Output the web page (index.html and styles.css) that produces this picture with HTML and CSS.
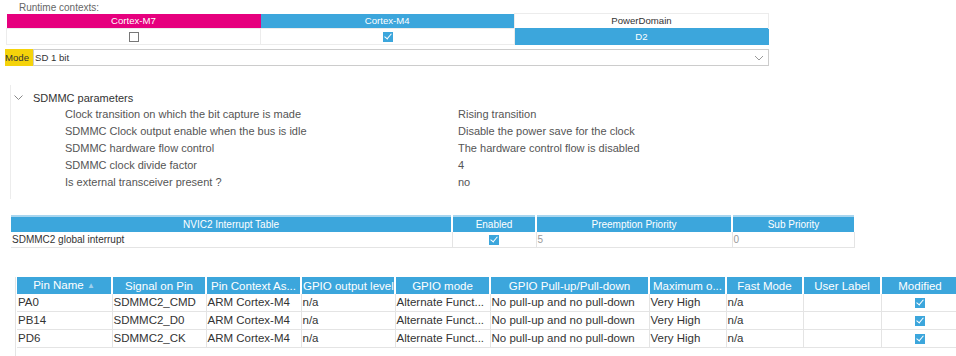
FILE: index.html
```html
<!DOCTYPE html>
<html lang="en">
  <head>
    <meta charset="UTF-8" />
    <meta name="viewport" content="width=device-width, initial-scale=1.0" />
    <title>SDMMC2 Configuration</title>
    <link rel="stylesheet" href="styles.css">
  </head>
  <body>
    <div class="runtime">
      <p class="runtime-label">Runtime contexts:</p>
      <table class="context-table">
        <tr>
          <th class="m7">Cortex-M7</th>
          <th class="m4">Cortex-M4</th>
          <th class="domain">PowerDomain</th>
        </tr>
        <tr>
          <td><span class="check"></span></td>
          <td><span class="check checked"></span></td>
          <td class="d2">D2</td>
        </tr>
      </table>
    </div>

    <div class="mode-row">
      <span class="mode-label">Mode</span>
      <div class="mode-select">
        <span>SD 1 bit</span>
        <svg width="10" height="6" viewBox="0 0 10 6"><path d="M1 1 L5 5 L9 1" fill="none" stroke="#999" stroke-width="1" /></svg>
      </div>
    </div>

    <div class="params">
      <div class="params-title">
        <svg width="9" height="6" viewBox="0 0 9 6"><path d="M0.5 0.5 L4.5 4.5 L8.5 0.5" fill="none" stroke="#888" stroke-width="1" /></svg>
        <span>SDMMC parameters</span>
      </div>
      <div class="param"><span class="param-name">Clock transition on which the bit capture is made</span><span>Rising transition</span></div>
      <div class="param"><span class="param-name">SDMMC Clock output enable when the bus is idle</span><span>Disable the power save for the clock</span></div>
      <div class="param"><span class="param-name">SDMMC hardware flow control</span><span>The hardware control flow is disabled</span></div>
      <div class="param"><span class="param-name">SDMMC clock divide factor</span><span>4</span></div>
      <div class="param"><span class="param-name">Is external transceiver present ?</span><span>no</span></div>
    </div>

    <table class="nvic-table">
      <colgroup>
        <col style="width: 441px" />
        <col style="width: 84px" />
        <col style="width: 196px" />
        <col style="width: 122px" />
      </colgroup>
      <tr>
        <th>NVIC2 Interrupt Table</th>
        <th>Enabled</th>
        <th>Preemption Priority</th>
        <th>Sub Priority</th>
      </tr>
      <tr>
        <td>SDMMC2 global interrupt</td>
        <td class="center"><span class="check checked"></span></td>
        <td class="muted">5</td>
        <td class="muted">0</td>
      </tr>
    </table>

    <div class="pins">
      <table class="pin-table">
        <colgroup>
          <col style="width: 95px" />
          <col style="width: 94px" />
          <col style="width: 95px" />
          <col style="width: 94px" />
          <col style="width: 95px" />
          <col style="width: 159px" />
          <col style="width: 77px" />
          <col style="width: 77px" />
          <col style="width: 78px" />
          <col style="width: 77px" />
        </colgroup>
        <tr>
          <th>Pin Name <span class="sort">&#9650;</span></th>
          <th>Signal on Pin</th>
          <th>Pin Context As...</th>
          <th>GPIO output level</th>
          <th>GPIO mode</th>
          <th>GPIO Pull-up/Pull-down</th>
          <th>Maximum o...</th>
          <th>Fast Mode</th>
          <th>User Label</th>
          <th>Modified</th>
        </tr>
        <tr>
          <td>PA0</td>
          <td>SDMMC2_CMD</td>
          <td>ARM Cortex-M4</td>
          <td>n/a</td>
          <td>Alternate Funct...</td>
          <td>No pull-up and no pull-down</td>
          <td>Very High</td>
          <td>n/a</td>
          <td></td>
          <td class="center"><span class="check checked"></span></td>
        </tr>
        <tr>
          <td>PB14</td>
          <td>SDMMC2_D0</td>
          <td>ARM Cortex-M4</td>
          <td>n/a</td>
          <td>Alternate Funct...</td>
          <td>No pull-up and no pull-down</td>
          <td>Very High</td>
          <td>n/a</td>
          <td></td>
          <td class="center"><span class="check checked"></span></td>
        </tr>
        <tr>
          <td>PD6</td>
          <td>SDMMC2_CK</td>
          <td>ARM Cortex-M4</td>
          <td>n/a</td>
          <td>Alternate Funct...</td>
          <td>No pull-up and no pull-down</td>
          <td>Very High</td>
          <td>n/a</td>
          <td></td>
          <td class="center"><span class="check checked"></span></td>
        </tr>
      </table>
    </div>
  </body>
</html>
```

FILE: styles.css
```css
body {
  margin: 0;
  background-color: #ffffff;
  color: #333333;
  font-family: "Liberation Sans", Arial, sans-serif;
  overflow: hidden;
}

table {
  border-collapse: collapse;
  table-layout: fixed;
}

.runtime {
  padding: 2px 0 0 6px;
}

.runtime-label {
  margin: 0 0 0 13px;
  font-size: 10px;
  line-height: 11px;
  color: #666666;
}

.context-table {
  width: 763px;
  font-size: 9.6px;
}

.context-table th {
  height: 14px;
  padding: 0;
  font-weight: normal;
  color: #ffffff;
  line-height: 14px;
}

.context-table .m7 {
  background-color: #e6007e;
}

.context-table .m4 {
  background-color: #3ca6dc;
}

.context-table .domain {
  background-color: #ffffff;
  color: #333333;
  border: 1px solid #ececec;
  border-bottom: none;
}

.context-table td {
  height: 15px;
  padding: 0;
  text-align: center;
  border: 1px solid #ececec;
  line-height: 14px;
}

.context-table .d2 {
  background-color: #3ca6dc;
  color: #ffffff;
  border-color: #3ca6dc;
}

.check {
  display: inline-block;
  width: 8px;
  height: 8px;
  border: 1px solid #777777;
  vertical-align: middle;
  position: relative;
}

.check.checked {
  background-color: #3ca6dc;
  border-color: #3ca6dc;
}

.check.checked::after {
  content: "";
  position: absolute;
  left: 2px;
  top: -1px;
  width: 3px;
  height: 6px;
  border-right: 1.5px solid #ffffff;
  border-bottom: 1.5px solid #ffffff;
  transform: rotate(40deg);
}

.mode-row {
  display: flex;
  margin: 4px 0 0 5px;
  width: 764px;
  height: 17px;
  font-size: 9.6px;
}

.mode-label {
  background-color: #f5d30a;
  padding: 0 4px 0 0;
  line-height: 17px;
}

.mode-select {
  flex: 1;
  display: flex;
  justify-content: space-between;
  align-items: center;
  border: 1px solid #cccccc;
  padding: 0 4px 0 1px;
}

.params {
  margin: 19px 0 0 10px;
  border-left: 1px solid #ececec;
  height: 110px;
  padding-top: 4px;
  font-size: 11px;
}

.params-title {
  display: flex;
  align-items: center;
  gap: 10px;
  padding-left: 3px;
  height: 17px;
  color: #333333;
}

.param {
  display: flex;
  height: 17px;
  line-height: 17px;
  color: #555555;
}

.param-name {
  width: 393px;
  padding-left: 54px;
}

.nvic-table {
  margin: 16px 0 0 11px;
  width: 843px;
  font-size: 10px;
  border-top: 2px solid #a9d6ef;
}

.nvic-table th {
  height: 15px;
  padding: 0;
  font-weight: normal;
  color: #ffffff;
  background-color: #3ca6dc;
  border-right: 2px solid #ffffff;
  line-height: 15px;
}

.nvic-table th:last-child {
  border-right: none;
}

.nvic-table td {
  height: 15px;
  padding: 0 1px;
  border-bottom: 1px solid #e4e4e4;
  border-right: 1px solid #e4e4e4;
  line-height: 15px;
}

.muted {
  color: #999999;
}

.center {
  text-align: center;
}

.pins {
  margin: 29px 0 0 15px;
  border-left: 1px solid #e4e4e4;
  height: 80px;
  padding-left: 1px;
}

.pin-table {
  width: 941px;
  font-size: 11.5px;
}

.pin-table th {
  height: 16px;
  padding: 0 1px;
  font-weight: normal;
  color: #ffffff;
  background-color: #3ca6dc;
  border-right: 2px solid #ffffff;
  line-height: 16px;
  white-space: nowrap;
  overflow: hidden;
}

.pin-table th:last-child {
  border-right: none;
}

.pin-table td {
  height: 17px;
  padding: 0 1px;
  border-bottom: 1px solid #e4e4e4;
  border-right: 1px solid #e4e4e4;
  line-height: 17px;
  white-space: nowrap;
  overflow: hidden;
}

.sort {
  color: #9fd0ec;
  font-size: 8px;
  vertical-align: 1px;
}
```
